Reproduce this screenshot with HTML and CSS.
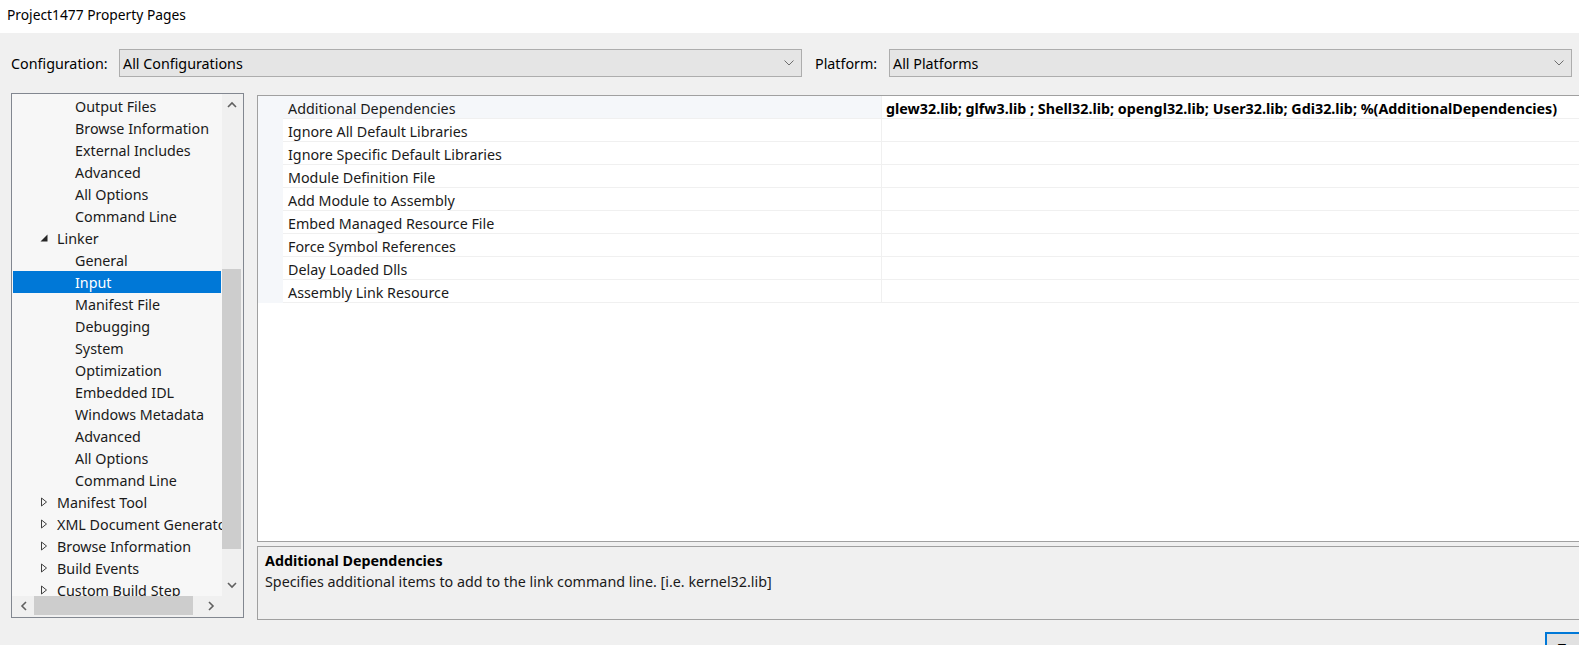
FILE: index.html
```html
<!DOCTYPE html>
<html>
<head>
<meta charset="utf-8">
<title>Project1477 Property Pages</title>
<link rel="stylesheet" href="styles.css">
</head>
<body>
<div class="window">
  <div class="titlebar">Project1477 Property Pages</div>

  <div class="config-row">
    <div class="cfg-label">Configuration:</div>
    <div class="combo">
      <span class="combo-text">All Configurations</span>
      <svg class="combo-chev" width="10" height="6" viewBox="0 0 10 6"><polyline points="0.5,0.5 5,5 9.5,0.5" fill="none" stroke="#6d6d6d" stroke-width="1"/></svg>
    </div>
    <div class="cfg-label plat">Platform:</div>
    <div class="combo">
      <span class="combo-text">All Platforms</span>
      <svg class="combo-chev" width="10" height="6" viewBox="0 0 10 6"><polyline points="0.5,0.5 5,5 9.5,0.5" fill="none" stroke="#6d6d6d" stroke-width="1"/></svg>
    </div>
  </div>

  <div class="main">
    <div class="tree">
      <div class="tree-view">
        <div class="node child">Output Files</div>
        <div class="node child">Browse Information</div>
        <div class="node child">External Includes</div>
        <div class="node child">Advanced</div>
        <div class="node child">All Options</div>
        <div class="node child">Command Line</div>
        <div class="node parent"><span class="tog"><svg width="8" height="8" viewBox="0 0 8 8"><polygon points="7.5,0.5 7.5,7.5 0.5,7.5" fill="#262626"/></svg></span>Linker</div>
        <div class="node child">General</div>
        <div class="node child selected">Input</div>
        <div class="node child">Manifest File</div>
        <div class="node child">Debugging</div>
        <div class="node child">System</div>
        <div class="node child">Optimization</div>
        <div class="node child">Embedded IDL</div>
        <div class="node child">Windows Metadata</div>
        <div class="node child">Advanced</div>
        <div class="node child">All Options</div>
        <div class="node child">Command Line</div>
        <div class="node parent"><span class="tog"><svg width="8" height="10" viewBox="0 0 8 10"><polygon points="1.5,1 6.5,5 1.5,9" fill="none" stroke="#404040" stroke-width="1"/></svg></span>Manifest Tool</div>
        <div class="node parent"><span class="tog"><svg width="8" height="10" viewBox="0 0 8 10"><polygon points="1.5,1 6.5,5 1.5,9" fill="none" stroke="#404040" stroke-width="1"/></svg></span>XML Document Generator</div>
        <div class="node parent"><span class="tog"><svg width="8" height="10" viewBox="0 0 8 10"><polygon points="1.5,1 6.5,5 1.5,9" fill="none" stroke="#404040" stroke-width="1"/></svg></span>Browse Information</div>
        <div class="node parent"><span class="tog"><svg width="8" height="10" viewBox="0 0 8 10"><polygon points="1.5,1 6.5,5 1.5,9" fill="none" stroke="#404040" stroke-width="1"/></svg></span>Build Events</div>
        <div class="node parent"><span class="tog"><svg width="8" height="10" viewBox="0 0 8 10"><polygon points="1.5,1 6.5,5 1.5,9" fill="none" stroke="#404040" stroke-width="1"/></svg></span>Custom Build Step</div>
      </div>
      <div class="vscroll">
        <div class="sb-btn"><svg width="10" height="7" viewBox="0 0 10 7"><polyline points="1,6 5,2 9,6" fill="none" stroke="#606060" stroke-width="1.6"/></svg></div>
        <div class="vtrack"><div class="vthumb"></div></div>
        <div class="sb-btn"><svg width="10" height="7" viewBox="0 0 10 7"><polyline points="1,1 5,5 9,1" fill="none" stroke="#606060" stroke-width="1.6"/></svg></div>
      </div>
      <div class="hscroll">
        <div class="sb-hbtn"><svg width="7" height="10" viewBox="0 0 7 10"><polyline points="6,1 2,5 6,9" fill="none" stroke="#606060" stroke-width="1.6"/></svg></div>
        <div class="htrack"><div class="hthumb"></div></div>
        <div class="sb-hbtn"><svg width="7" height="10" viewBox="0 0 7 10"><polyline points="1,1 5,5 1,9" fill="none" stroke="#606060" stroke-width="1.6"/></svg></div>
      </div>
      <div class="corner"></div>
    </div>

    <div class="right">
      <div class="grid">
        <div class="prow first">
          <div class="gutter"></div>
          <div class="pname">Additional Dependencies</div>
          <div class="pval">glew32.lib; glfw3.lib ; Shell32.lib; opengl32.lib; User32.lib; Gdi32.lib; %(AdditionalDependencies)</div>
        </div>
        <div class="prow"><div class="gutter"></div><div class="pname">Ignore All Default Libraries</div><div class="pval"></div></div>
        <div class="prow"><div class="gutter"></div><div class="pname">Ignore Specific Default Libraries</div><div class="pval"></div></div>
        <div class="prow"><div class="gutter"></div><div class="pname">Module Definition File</div><div class="pval"></div></div>
        <div class="prow"><div class="gutter"></div><div class="pname">Add Module to Assembly</div><div class="pval"></div></div>
        <div class="prow"><div class="gutter"></div><div class="pname">Embed Managed Resource File</div><div class="pval"></div></div>
        <div class="prow"><div class="gutter"></div><div class="pname">Force Symbol References</div><div class="pval"></div></div>
        <div class="prow"><div class="gutter"></div><div class="pname">Delay Loaded Dlls</div><div class="pval"></div></div>
        <div class="prow"><div class="gutter"></div><div class="pname">Assembly Link Resource</div><div class="pval"></div></div>
      </div>
      <div class="desc">
        <div class="desc-title">Additional Dependencies</div>
        <div class="desc-text">Specifies additional items to add to the link command line. [i.e. kernel32.lib]</div>
      </div>
    </div>
  </div>

  <div class="footer">
    <div class="btn">T</div>
  </div>
</div>
</body>
</html>
```

FILE: styles.css
```css
html, body {
  margin: 0;
  padding: 0;
}
body {
  width: 1579px;
  height: 645px;
  overflow: hidden;
  background: #f0f0f0;
  font-family: "Noto Sans", "Open Sans", sans-serif;
  font-size: 14.3px;
  color: #1a1a1a;
}
.window {
  display: flex;
  flex-direction: column;
  width: 1579px;
  height: 645px;
}
.titlebar {
  height: 33px;
  flex: none;
  background: #ffffff;
  padding-left: 7px;
  line-height: 30px;
  font-size: 13.8px;
  color: #000;
}
.config-row {
  flex: none;
  margin-top: 16px;
  height: 28px;
  display: flex;
  align-items: stretch;
  padding: 0 7px 0 11px;
}
.cfg-label {
  width: 108px;
  flex: none;
  line-height: 28px;
  padding-top: 1px;
  box-sizing: border-box;
  color: #000;
}
.cfg-label.plat {
  width: 74px;
  margin-left: 13px;
}
.combo {
  flex: 1;
  box-sizing: border-box;
  border: 1px solid #adadad;
  background: #e5e5e5;
  display: flex;
  align-items: center;
  justify-content: space-between;
  padding: 0 7px 0 3px;
}
.combo-text {
  color: #000;
  line-height: 26px;
  padding-top: 2px;
}
.combo-chev {
  display: block;
}
.main {
  flex: none;
  margin-top: 16px;
  height: 527px;
  display: flex;
  padding-left: 11px;
}
.tree {
  flex: none;
  width: 233px;
  height: 525px;
  box-sizing: border-box;
  border: 1px solid #828790;
  display: grid;
  grid-template-columns: 210px 21px;
  grid-template-rows: 502px 21px;
  background: #f0f0f0;
}
.tree-view {
  background: #f7f7f7;
  overflow: hidden;
  padding-top: 1px;
}
.node {
  height: 22px;
  box-sizing: border-box;
  padding-top: 2px;
  line-height: 20px;
  white-space: nowrap;
  margin: 0 1px;
  display: flex;
  align-items: center;
  color: #1a1a1a;
}
.node.child {
  padding-left: 62px;
}
.node.parent {
  padding-left: 27px;
}
.node.selected {
  background: #0078d7;
  color: #ffffff;
}
.tog {
  width: 17px;
  flex: none;
  display: flex;
  align-items: center;
  margin-top: -2px;
}
.tog svg {
  display: block;
}
.vscroll {
  display: flex;
  flex-direction: column;
  background: #f0f0f0;
}
.sb-btn {
  height: 21px;
  flex: none;
  display: flex;
  align-items: center;
  justify-content: center;
  padding-right: 2px;
}
.vtrack {
  flex: 1;
  padding-top: 154px;
}
.vthumb {
  width: 19px;
  height: 280px;
  background: #cdcdcd;
}
.hscroll {
  display: flex;
  background: #f0f0f0;
}
.sb-hbtn {
  width: 22px;
  flex: none;
  height: 19px;
  display: flex;
  align-items: center;
  justify-content: center;
}
.htrack {
  flex: 1;
}
.hthumb {
  width: 159px;
  height: 19px;
  background: #cdcdcd;
}
.corner {
  background: #f0f0f0;
}
.right {
  flex: none;
  width: 1340px;
  margin-left: 13px;
  padding-top: 2px;
  display: flex;
  flex-direction: column;
}
.grid {
  height: 447px;
  box-sizing: border-box;
  border: 1px solid #a0a0a0;
  background: #ffffff;
}
.prow {
  display: grid;
  grid-template-columns: 25px 599px 1fr;
  height: 23px;
}
.gutter {
  background: #f5f7fa;
}
.pname, .pval {
  box-sizing: border-box;
  border-bottom: 1px solid #f0f0f0;
  padding-top: 3px;
  line-height: 19px;
  white-space: nowrap;
  overflow: hidden;
  color: #1a1a1a;
}
.pname {
  padding-left: 5px;
  border-right: 1px solid #f0f0f0;
}
.prow.first .pname {
  background: #f5f7fa;
}
.pval {
  padding-left: 4px;
  font-weight: 700;
  color: #000;
}
.desc {
  margin-top: 4px;
  height: 74px;
  box-sizing: border-box;
  border: 1px solid #a0a0a0;
  padding: 3px 7px 0 7px;
  line-height: 21px;
}
.desc-title {
  font-weight: 700;
  color: #000;
}
.desc-text {
  color: #1a1a1a;
}
.footer {
  flex: none;
  margin-top: 12px;
  display: flex;
  justify-content: flex-end;
  margin-right: -50px;
}
.btn {
  width: 84px;
  height: 30px;
  box-sizing: border-box;
  border: 2px solid #0078d7;
  background: #e1e1e1;
  padding-left: 11px;
  padding-top: 5px;
  line-height: 20px;
  color: #000;
}
```
